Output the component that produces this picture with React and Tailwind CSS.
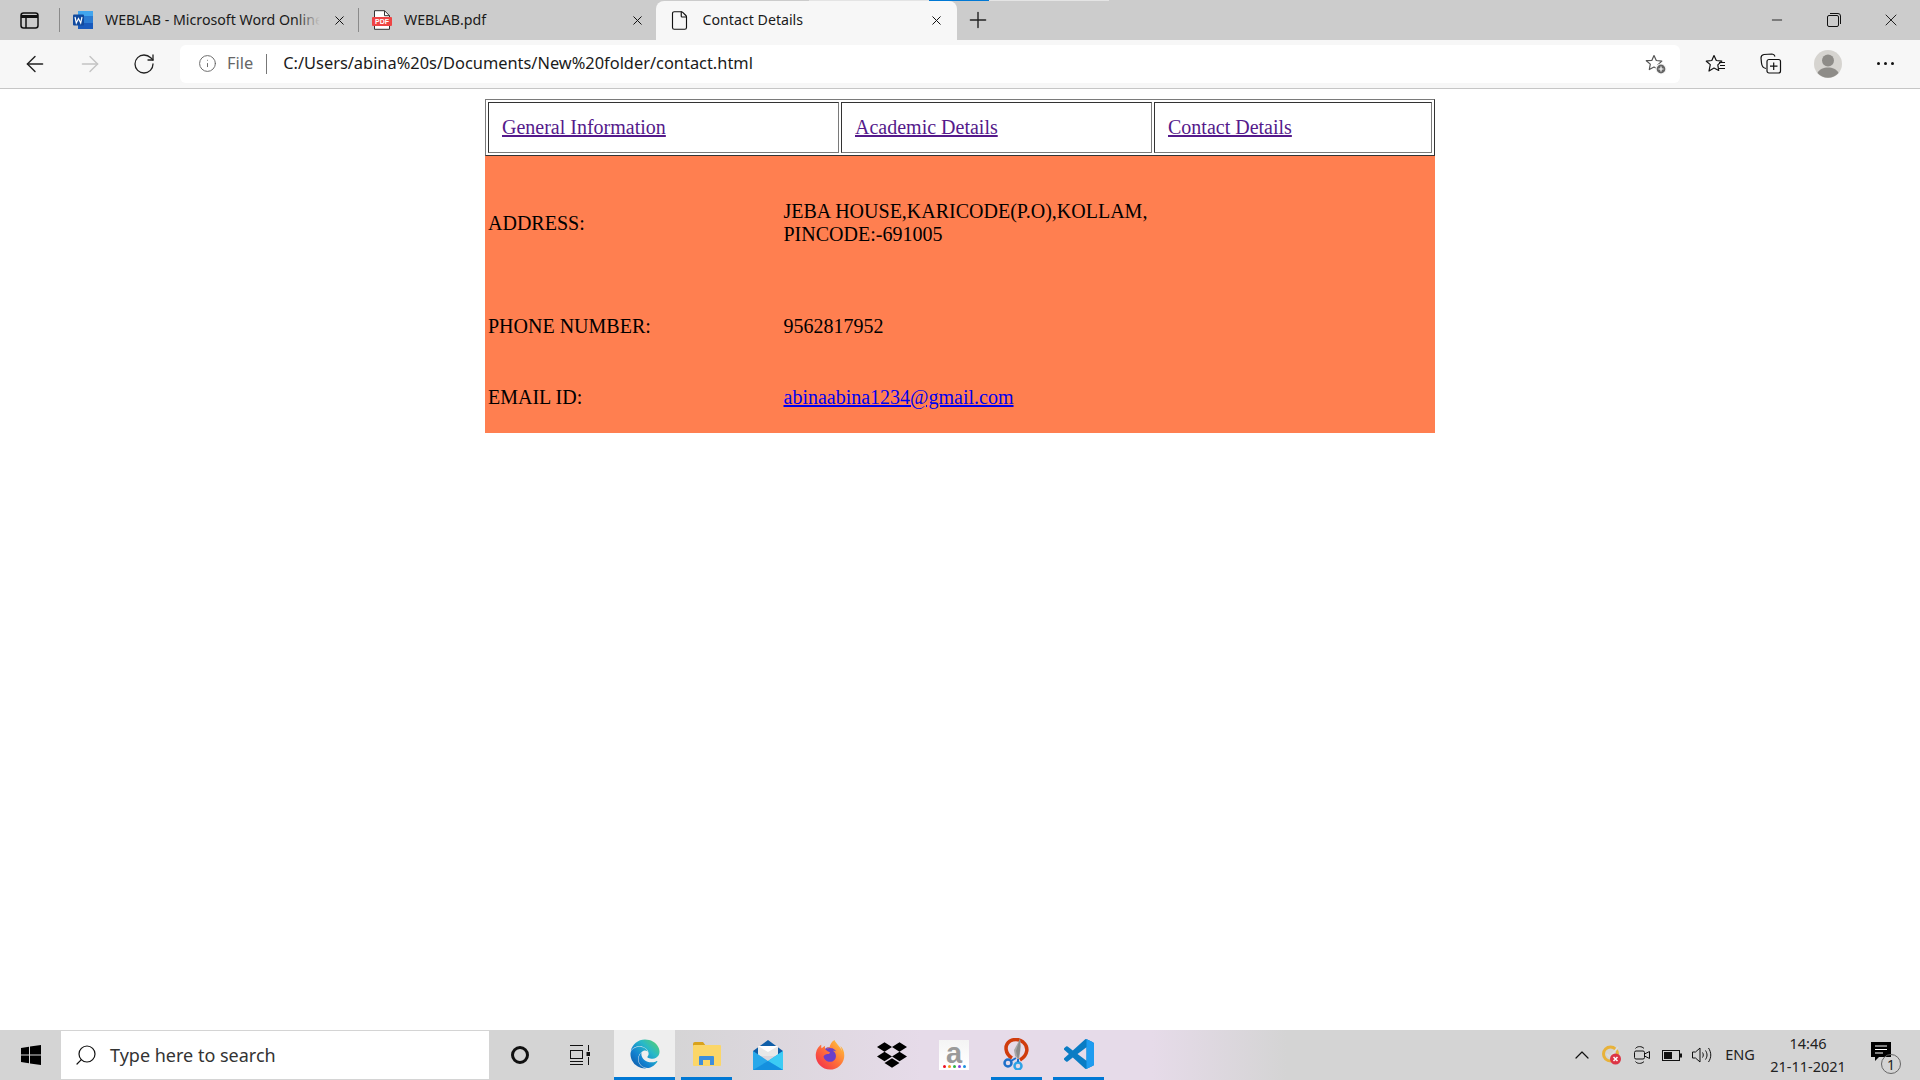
import React from "react";
import { ArrowLeft, ArrowRight, RotateCw, Info, X, Plus, Minus, File, Search, ChevronUp } from "lucide-react";
import { SiDropbox } from "react-icons/si";
import { FaFirefoxBrowser, FaEdge } from "react-icons/fa";

const WinIcon = () => (
  <svg width="20" height="20" viewBox="0 0 20 20" fill="#000"><path d="M0 3l8-1.2V9.500H0zM9 1.600L20 0v9.500H9zM0 10.500h8v7.700L0 17zM9 10.500h11V20L9 18.400z"/></svg>
);
const WordIcon = () => (
  <svg width="20" height="18" viewBox="0 0 20 18">
    <rect x="5" y="0" width="15" height="18" rx="1" fill="#2b7cd3"/>
    <rect x="5" y="0" width="15" height="5" fill="#41a5ee"/>
    <rect x="5" y="12" width="15" height="6" fill="#185abd"/>
    <rect x="0" y="3.500" width="11" height="11" rx="1" fill="#114a9e"/>
    <path d="M2 6l1.300 6 2.200-4.500L7.700 12 9 6" stroke="#fff" strokeWidth="1.200" fill="none"/>
  </svg>
);
const PdfIcon = () => (
  <svg width="20" height="20" viewBox="0 0 20 20">
    <path d="M2.500.700h10l5 5v13.600h-15z" fill="#fff" stroke="#333" strokeWidth="1"/>
    <path d="M12.500.700v5h5" fill="none" stroke="#333" strokeWidth="1"/>
    <rect x="0" y="7" width="20" height="9" rx="1" fill="#ee4444"/>
    <text x="10" y="14.200" textAnchor="middle" fontSize="7" fontWeight="700" fill="#fff" fontFamily="Liberation Sans, sans-serif">PDF</text>
  </svg>
);
const TabsIcon = () => (
  <svg width="19" height="17" viewBox="0 0 19 17" fill="none" stroke="#111" strokeWidth="1.500">
    <rect x="1" y="1" width="17" height="15" rx="2.500"/>
    <path d="M1 4.500h17" strokeWidth="3"/><path d="M6 5v11"/>
  </svg>
);
const StarAdd = () => (
  <svg width="22" height="22" viewBox="0 0 22 22" fill="none" stroke="#555" strokeWidth="1.200">
    <path d="M9 2.500l2.300 5 5.500.6-4 3.800.9 4.600-4.700-2.500-4.700 2.500 1-5.400-4-3.400 5.500-.2z" strokeLinejoin="round"/>
    <circle cx="16" cy="16" r="5" fill="#666" stroke="#f7f7f7"/>
    <path d="M16 13.500v5M13.500 16h5" stroke="#fff"/>
  </svg>
);
const FavIcon = () => (
  <svg width="22" height="20" viewBox="0 0 22 20" fill="none" stroke="#111" strokeWidth="1.200">
    <path d="M9 1.500l2.300 5 5.500.6-4 3.800.9 5.600-4.700-2.500-5 3 1.300-6.400-4-3.400 5.500-.7z" strokeLinejoin="round"/>
    <path d="M14 8.500h6M15 11.500h5M14 14.500h6"/>
  </svg>
);
const CollIcon = () => (
  <svg width="22" height="21" viewBox="0 0 22 21" fill="none" stroke="#111" strokeWidth="1.200">
    <path d="M6 15.500C3 15 1.800 13 1.500 10L1 5c0-2 1-3.200 3-3.500L12 1c1.500 0 2.500 1 3 2.500"/>
    <rect x="7" y="6.500" width="13.500" height="13.500" rx="2"/>
    <path d="M13.700 9.500v7.500M10 13.200h7.500"/>
  </svg>
);
const Avatar = () => (
  <svg width="28" height="28" viewBox="0 0 28 28">
    <circle cx="14" cy="14" r="14" fill="#d6d4d0"/>
    <circle cx="14" cy="10.500" r="6" fill="#8e8c88"/>
    <path d="M3.500 23c2-4 6-5.500 10.500-5.500S22.500 19 24.500 23a14 14 0 0 1-21 0z" fill="#8e8c88"/>
  </svg>
);
const Restore = () => (
  <svg width="14" height="14" viewBox="0 0 14 14" fill="none" stroke="#111" strokeWidth="1">
    <rect x=".5" y="2.500" width="11" height="11" rx="1.500"/>
    <path d="M3 .5h8a2.500 2.500 0 0 1 2.500 2.500v8"/>
  </svg>
);
const TaskView = () => (
  <svg width="20" height="20" viewBox="0 0 20 20" fill="none" stroke="#111" strokeWidth="1">
    <path d="M0 .5h13M0 19.500h13M0 16.500h13"/>
    <rect x=".5" y="5.500" width="12" height="8"/>
    <path d="M18.500 0v6M18.500 12v8"/>
    <rect x="17" y="7.500" width="3" height="3" fill="#111"/>
  </svg>
);
const Folder = () => (
  <svg width="28" height="24" viewBox="0 0 28 24">
    <path d="M0 2a2 2 0 0 1 2-2h8l3 4H0z" fill="#d9a21b"/>
    <rect x="0" y="3" width="28" height="21" rx="1" fill="#fbd668"/>
    <path d="M6 23v-8a1 1 0 0 1 1-1h13a1 1 0 0 1 1 1v8h-4v-5h-7v5z" fill="#3d8edb"/>
  </svg>
);
const Mail = () => (
  <svg width="30" height="30" viewBox="0 0 30 30">
    <path d="M0 11L15 0l15 11v4H0z" fill="#0f5ea8"/>
    <path d="M5 6h20v10H5z" fill="#e8e8e8"/>
    <path d="M5 6h20l-10 6z" fill="#fff"/>
    <path d="M0 11l15 10 15-10v19H0z" fill="#28a8ea"/>
    <path d="M15 21l15-10v19z" fill="#3ccbf4"/>
    <path d="M0 30l15-9 15 9z" fill="#1490df"/>
  </svg>
);
const Amazon = () => (
  <div className="relative flex h-[30px] w-[30px] flex-col items-center bg-[linear-gradient(180deg,#f4f4f4,#fff_85%)]">
    <span className="font-['Liberation_Sans',sans-serif] text-[29px] leading-[26px] font-bold text-[#9a9a9a]">a</span>
    <div className="absolute bottom-[2px] flex gap-[2px]">
      <i className="h-[3px] w-[3px] rounded-full bg-[#ee1122]" />
      <i className="h-[3px] w-[3px] rounded-full bg-[#f59a1c]" />
      <i className="h-[3px] w-[3px] rounded-full bg-[#2fb44a]" />
      <i className="h-[3px] w-[3px] rounded-full bg-[#8b3fd9]" />
      <i className="h-[3px] w-[3px] rounded-full bg-[#1e90e0]" />
    </div>
  </div>
);
const Snip = () => (
  <svg width="28" height="32" viewBox="0 0 28 32" fill="none">
    <path d="M9 20C2 16 1 7 7 3c4-2 9-2 13 1 6 5 5 13-3 18" stroke="#d03b0c" strokeWidth="3.500"/>
    <path d="M17 1l1 7-2 14-4-4-1-6z" fill="#a8a8a8"/>
    <path d="M17 1l-4 12 2 9 2-9z" fill="#8a8a8a"/>
    <circle cx="5" cy="25" r="3.500" stroke="#1f6fc9" strokeWidth="2.500"/>
    <circle cx="15" cy="28" r="3.500" stroke="#2fa3e6" strokeWidth="2.500"/>
    <path d="M8 23l5-3M15 24v-3" stroke="#1f6fc9" strokeWidth="2"/>
  </svg>
);
const VSCode = () => (
  <svg width="30" height="30" viewBox="0 0 100 100">
    <path d="M96.500 10.800L75.900.9a6.200 6.200 0 0 0-7.100 1.200L29.400 38 12.200 25a4.200 4.200 0 0 0-5.300.2l-5.500 5a4.200 4.200 0 0 0 0 6.200L16.300 50 1.400 63.600a4.200 4.200 0 0 0 0 6.200l5.500 5a4.200 4.200 0 0 0 5.300.2l17.200-13 39.400 35.900a6.200 6.200 0 0 0 7.100 1.200l20.600-9.900A6.200 6.200 0 0 0 100 83.500v-67a6.200 6.200 0 0 0-3.500-5.700zM75 72.700L45.100 50 75 27.300z" fill="#0a7cc4"/>
    <path d="M75 .4a6.200 6.200 0 0 1 .9.500l20.600 9.900a6.200 6.200 0 0 1 3.500 5.700v67a6.200 6.200 0 0 1-3.500 5.700l-20.600 9.900a6.200 6.200 0 0 1-.9.400z" fill="#1f9cf0"/>
  </svg>
);
const AV = () => (
  <svg width="20" height="20" viewBox="0 0 20 20">
    <circle cx="8.500" cy="9" r="7" fill="none" stroke="#e8b23a" strokeWidth="3"/>
    <path d="M5 9l3 3 8-10" stroke="#ddd" strokeWidth="2" fill="none"/>
    <circle cx="13.500" cy="14" r="5.500" fill="#dc3545"/>
    <path d="M11.500 12l4 4M15.500 12l-4 4" stroke="#fff" strokeWidth="1.500"/>
  </svg>
);
const Camera = () => (
  <svg width="16" height="20" viewBox="0 0 16 20" fill="none" stroke="#111" strokeWidth="1">
    <path d="M1.500 3.500C3 1 8 1 10 3.500M1.500 16.500C3 19 8 19 10 16.500"/>
    <rect x=".5" y="6" width="10" height="8" rx="1.500"/>
    <path d="M10.500 9l5-2.500v7l-5-2.500"/>
  </svg>
);
const Battery = () => (
  <svg width="20" height="11" viewBox="0 0 20 11" fill="none" stroke="#111">
    <rect x=".5" y=".5" width="17" height="10"/>
    <rect x="2" y="2" width="8" height="7" fill="#111" stroke="none"/>
    <rect x="18" y="3.500" width="2" height="4" fill="#111" stroke="none"/>
  </svg>
);
const Volume = () => (
  <svg width="20" height="16" viewBox="0 0 20 16" fill="none" stroke="#111" strokeWidth="1">
    <path d="M.5 5h3L8 1v14l-4.500-4h-3z"/>
    <path d="M10.500 5.500c1 1.500 1 3.500 0 5M13.500 3.500c2 3 2 6 0 9M16.500 1c3 4.500 3 9.500 0 14"/>
  </svg>
);
const Notif = () => (
  <svg width="20" height="20" viewBox="0 0 20 20">
    <path d="M0 0h20v15H8l-4 4v-4H0z" fill="#000"/>
    <path d="M4 4h12M4 7.500h12M4 11h8" stroke="#fff" strokeWidth="1"/>
  </svg>
);

const Tab = ({ icon, label, active, fade, className }) => (
  <div className={`relative flex items-center ${className} ${active ? "mt-px h-[43px] self-start rounded-t-[8px] bg-[#f7f7f7] pb-[5px]" : "h-[40px]"}`}>
    <div className={`flex shrink-0 items-center justify-center ${active ? "w-[46.500px]" : "w-[45px]"}`}>{icon}</div>
    <div className="relative min-w-0 flex-1 overflow-hidden whitespace-nowrap text-[14.200px] text-[#1a1a1a]">
      {label}
      {fade && <div className="absolute top-0 right-0 h-full w-6 bg-[linear-gradient(90deg,transparent,#cccccc)]" />}
    </div>
    <div className={`flex shrink-0 items-center justify-center ${active ? "w-[42px]" : "w-[38px]"}`}>
      <X size={15} strokeWidth={1.600} color="#111" />
    </div>
  </div>
);

const Sep = () => <div className="h-[24px] w-px shrink-0 bg-[#8a8a8a]" />;

const Cell = ({ width, children }) => (
  <div className={`flex items-center border border-t-[#333333] border-r-[#7a7a7a] border-b-[#7a7a7a] border-l-[#333333] pl-[13px] ${width}`}>
    {children}
  </div>
);

const Row = ({ height, label, children }) => (
  <div className={`flex items-center ${height}`}>
    <div className="w-[298.500px] pl-[3px]">{label}</div>
    <div>{children}</div>
  </div>
);

const Tray = ({ className, children }) => (
  <div className={`flex h-[50px] shrink-0 items-center justify-center ${className}`}>{children}</div>
);

const App = () => (
  <div className="flex h-[1080px] w-[1920px] flex-col overflow-hidden bg-white font-['Noto_Sans',sans-serif]">
    {/* Tab strip */}
    <div className="relative flex h-[40px] shrink-0 items-center bg-[#cccccc]">
      <div className="absolute top-0 left-[809px] h-px w-[300px] bg-[#e4e4e4]" />
      <div className="absolute top-0 left-[929px] h-px w-[60px] bg-[#0078d4]" />
      <div className="flex w-[59px] shrink-0 items-center justify-center pr-[1px]"><TabsIcon /></div>
      <Sep />
      <Tab className="w-[298px] shrink-0" icon={<WordIcon />} label="WEBLAB - Microsoft Word Online" fade />
      <Sep />
      <Tab className="w-[297px] shrink-0" icon={<PdfIcon />} label="WEBLAB.pdf" />
      <Tab className="z-10 w-[301px] shrink-0" icon={<File size={21} strokeWidth={1.300} color="#111" />} label="Contact Details" active />
      <div className="ml-[8px] flex items-center"><Plus size={26} strokeWidth={1.300} color="#222" /></div>
      <div className="ml-auto flex items-center pr-[1px]">
        <div className="flex w-[57px] justify-center"><Minus size={16} strokeWidth={1.300} color="#111" /></div>
        <div className="flex w-[57px] justify-center"><Restore /></div>
        <div className="flex w-[57px] justify-center"><X size={20} strokeWidth={1.100} color="#111" /></div>
      </div>
    </div>

    {/* Toolbar */}
    <div className="flex h-[49px] shrink-0 items-center border-b border-[#c6c6c6] bg-[#f7f7f7] pb-[1px]">
      <div className="flex w-[180px] shrink-0 items-center pl-[22px]">
        <ArrowLeft size={26} strokeWidth={1.300} color="#222" />
        <div className="ml-[29px]"><ArrowRight size={26} strokeWidth={1.300} color="#c4c4c4" /></div>
        <div className="ml-[29px]"><RotateCw size={24} strokeWidth={1.300} color="#222" /></div>
      </div>
      <div className="flex h-[38px] w-[1500px] shrink-0 items-center rounded-[6px] bg-white pl-[18px]">
        <Info size={19} strokeWidth={1.200} color="#666" />
        <span className="ml-[10px] text-[16.400px] text-[#666666]">File</span>
        <div className="ml-[13px] h-[20px] w-px bg-[#777777]" />
        <span className="ml-[16px] text-[16.400px] text-[#1a1a1a]">C:/Users/abina%20s/Documents/New%20folder/contact.html</span>
        <div className="mr-[13px] ml-auto flex"><StarAdd /></div>
      </div>
      <div className="flex flex-1 items-center">
        <div className="flex w-[72px] justify-center"><FavIcon /></div>
        <div className="flex w-[38px] justify-center"><CollIcon /></div>
        <div className="flex w-[76px] justify-center"><Avatar /></div>
        <div className="flex w-[38px] justify-center gap-[4px]">
          <i className="h-[3px] w-[3px] rounded-full bg-[#111]" />
          <i className="h-[3px] w-[3px] rounded-full bg-[#111]" />
          <i className="h-[3px] w-[3px] rounded-full bg-[#111]" />
        </div>
      </div>
    </div>

    {/* Page */}
    <div className="flex-1 pt-[10px] font-['Liberation_Serif',serif] text-[20px] leading-[23px] text-black">
      <div className="mx-auto w-[950px]">
        <div className="flex h-[57px] gap-[2px] border border-t-[#7a7a7a] border-r-[#333333] border-b-[#333333] border-l-[#7a7a7a] p-[2px]">
          <Cell width="w-[351px]"><a href="#a" className="text-[#551a8b] underline">General Information</a></Cell>
          <Cell width="w-[311px]"><a href="#b" className="text-[#551a8b] underline">Academic Details</a></Cell>
          <Cell width="w-[278px]"><a href="#c" className="text-[#551a8b] underline">Contact Details</a></Cell>
        </div>
        <div className="bg-[#ff7f50]">
          <Row height="h-[135px]" label="ADDRESS:">
            <div className="-mt-[1px]">JEBA HOUSE,KARICODE(P.O),KOLLAM,<br />PINCODE:-691005</div>
          </Row>
          <Row height="h-[70px]" label="PHONE NUMBER:">9562817952</Row>
          <Row height="h-[72px]" label="EMAIL ID:">
            <a href="#m" className="text-[#0000ee] underline">abinaabina1234@gmail.com</a>
          </Row>
        </div>
      </div>
    </div>

    {/* Taskbar */}
    <div className="flex h-[50px] shrink-0 items-center bg-[linear-gradient(90deg,#d4d4d4_0%,#d4d4d4_34%,#e6dbe9_48%,#e6dbe9_60%,#d4d4d4_67%,#d4d4d4_100%)]">
      <Tray className="w-[61px]"><WinIcon /></Tray>
      <div className="flex h-[48px] w-[428px] shrink-0 items-center bg-white pl-[13px]">
        <Search size={24} strokeWidth={1.200} color="#111" className="-scale-x-100" />
        <span className="ml-[12px] text-[18px] text-[#333333]">Type here to search</span>
      </div>
      <Tray className="ml-[11px] w-[40px]"><div className="h-[18px] w-[18px] rounded-full border-[3px] border-[#111]" /></Tray>
      <Tray className="ml-[20px] w-[40px]"><TaskView /></Tray>
      <Tray className="ml-[14px] w-[61px] border-b-[3px] border-[#0078d4] bg-[#eeeeee]">
        <FaEdge size={30} fill="url(#edgeGrad)" />
        <svg width="0" height="0" className="absolute"><defs>
          <linearGradient id="edgeGrad" x1="1" y1="0" x2="0" y2="1">
            <stop offset="0" stopColor="#5fd35f" /><stop offset=".35" stopColor="#28b9c8" /><stop offset=".65" stopColor="#1382d0" /><stop offset="1" stopColor="#0d52a0" />
          </linearGradient>
          <linearGradient id="ffGrad" x1="1" y1="0" x2="0" y2="1">
            <stop offset="0" stopColor="#ffd43b" /><stop offset=".5" stopColor="#ff7139" /><stop offset="1" stopColor="#f0244f" />
          </linearGradient>
        </defs></svg>
      </Tray>
      <Tray className="ml-[6px] w-[51px] border-b-[3px] border-[#0078d4]"><Folder /></Tray>
      <Tray className="ml-[11px] w-[50px]"><Mail /></Tray>
      <Tray className="ml-[12px] w-[50px]">
        <div className="relative flex h-[30px] w-[30px] items-center justify-center">
          <div className="absolute h-[16px] w-[16px] rounded-full bg-[#6b3fc9]" />
          <FaFirefoxBrowser size={30} fill="url(#ffGrad)" className="relative" />
        </div>
      </Tray>
      <Tray className="ml-[12px] w-[50px]"><SiDropbox size={30} color="#000" /></Tray>
      <Tray className="ml-[12px] w-[50px]"><Amazon /></Tray>
      <Tray className="ml-[12px] w-[51px] border-b-[3px] border-[#0078d4]"><Snip /></Tray>
      <Tray className="ml-[11px] w-[51px] border-b-[3px] border-[#0078d4]"><VSCode /></Tray>
      <div className="ml-auto flex h-[50px] items-center text-[#222222]">
        <Tray className="w-[30px]"><ChevronUp size={24} strokeWidth={1.200} color="#111" /></Tray>
        <Tray className="w-[30px]"><AV /></Tray>
        <Tray className="w-[30px]"><Camera /></Tray>
        <Tray className="w-[30px]"><Battery /></Tray>
        <Tray className="w-[30px]"><Volume /></Tray>
        <Tray className="ml-[1px] w-[44px] text-[14.500px]">ENG</Tray>
        <Tray className="ml-[3px] w-[86px] flex-col text-[14.500px] leading-[23px]"><span>14:46</span><span>21-11-2021</span></Tray>
        <Tray className="relative ml-[6px] w-[63px] justify-start pl-[14px] pb-[7px]">
          <Notif />
          <div className="absolute top-[24px] left-[24px] flex h-[20px] w-[20px] items-center justify-center rounded-full border border-[#666] text-[14px]">1</div>
        </Tray>
      </div>
    </div>
  </div>
);

export default App;
